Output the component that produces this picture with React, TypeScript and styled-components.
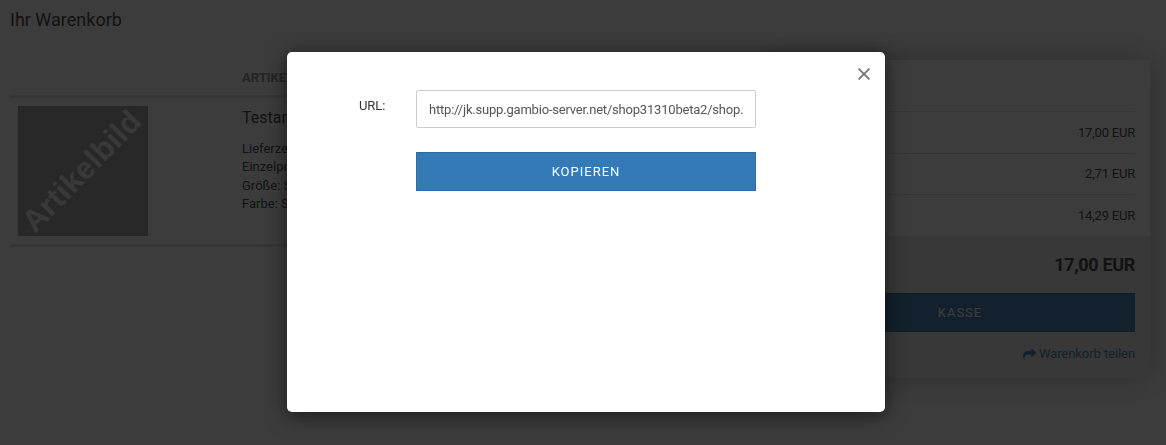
import React from "react";
import styled, { createGlobalStyle } from "styled-components";

const GlobalStyle = createGlobalStyle`
  *, *::before, *::after { box-sizing: border-box; }
  body {
    margin: 0;
    overflow: hidden;
    background: #fff;
    color: #333;
    font: 13px/18.5px Roboto, "Liberation Sans", sans-serif;
  }
`;

const Page = styled.div`
  height: 445px;
  padding: 8px 16px 0 10px;
`;

const Title = styled.h1`
  margin: 0;
  font-size: 18px;
  line-height: 24px;
  font-weight: 400;
`;

const Columns = styled.div`
  display: grid;
  grid-template-columns: 730px 380px;
  gap: 30px;
  align-items: start;
  margin-top: 28px;
`;

const CartTable = styled.section`
  padding-top: 9px;
`;

const CartHead = styled.div`
  height: 29px;
  padding-left: 232px;
  border-bottom: 3px solid #e0e0e0;
  color: #888;
  font-weight: 700;
  line-height: 18px;
  text-transform: uppercase;
`;

const CartRow = styled.div`
  display: grid;
  grid-template-columns: 130px 1fr;
  column-gap: 94px;
  height: 149px;
  padding: 8px 0 0 8px;
  border-bottom: 3px solid #e0e0e0;
`;

const Thumb = styled.svg`
  display: block;
  width: 130px;
  height: 130px;
  overflow: visible;
  background: #9c9c9c;
`;

const ItemName = styled.div`
  padding-top: 1px;
  margin-bottom: 11px;
  font-size: 16px;
  line-height: 22px;
`;

const ItemDetail = styled.div`
  line-height: 18.4px;
`;

const Summary = styled.aside`
  background: #fff;
  box-shadow: 0 0 30px rgba(0, 0, 0, 0.3);
`;

const SummaryRows = styled.div`
  padding: 51px 15px 0;
`;

const SummaryRow = styled.div`
  display: flex;
  justify-content: space-between;
  height: 41.6px;
  padding-top: 11.8px;
  border-top: 1px solid #ddd;
  letter-spacing: -0.2px;
`;

const SummaryFooter = styled.div`
  height: 142px;
  padding: 17px 15px 0;
  background: #eaeaea;
`;

const Total = styled.div`
  display: flex;
  justify-content: space-between;
  font-size: 18px;
  font-weight: 700;
  line-height: 24px;
  letter-spacing: -0.33px;
`;

const Button = styled.button<{ $top: number }>`
  display: block;
  width: 100%;
  height: 39px;
  margin: ${(p) => p.$top}px 0 0;
  padding: 1px 0 0;
  border: 1px solid #2e6da4;
  background: #337ab7;
  color: #fff;
  font: inherit;
  letter-spacing: 1px;
  text-transform: uppercase;
`;

const ShareLink = styled.a`
  display: flex;
  align-items: center;
  justify-content: flex-end;
  gap: 3px;
  margin-top: 13px;
  color: #337ab7;
  letter-spacing: -0.07px;
`;

const Overlay = styled.div`
  position: fixed;
  inset: 0;
  padding: 52px 0 0 287px;
  background: rgba(11, 11, 11, 0.8);
`;

const Modal = styled.div`
  position: relative;
  width: 598px;
  height: 360px;
  padding: 38px 129px 0 72px;
  border-radius: 5px;
  background: #fff;
  box-shadow: 0 3px 20px rgba(0, 0, 0, 0.6);
`;

const Close = styled.button`
  position: absolute;
  top: 15px;
  right: 14px;
  display: flex;
  padding: 0;
  border: 0;
  background: none;
`;

const Form = styled.div`
  display: grid;
  grid-template-columns: 57px 340px;
`;

const Label = styled.label`
  padding-top: 7px;
  letter-spacing: -0.1px;
`;

const UrlInput = styled.input`
  width: 100%;
  height: 38px;
  padding: 0 11px 0 12px;
  border: 1px solid #ccc;
  border-radius: 2px;
  background: #fff;
  color: #555;
  font: inherit;
  letter-spacing: -0.2px;
  outline: none;
`;

const details = ["Lieferzeit: 3-4 Tage", "Einzelpreis 17,00 EUR", "Größe: S", "Farbe: Schwarz"];
const sums = [
  ["Zwischensumme", "17,00 EUR"],
  ["inkl. 19% MwSt.", "2,71 EUR"],
  ["Summe netto", "14,29 EUR"],
];

export default function App() {
  return (
    <>
      <GlobalStyle />
      <Page>
        <Title>Ihr Warenkorb</Title>
        <Columns>
          <CartTable>
            <CartHead>Artikel</CartHead>
            <CartRow>
              <Thumb viewBox="0 0 130 130">
                <text
                  transform="translate(17 128) rotate(-45.8)"
                  fontFamily="Liberation Sans, sans-serif"
                  fontWeight="700"
                  fontSize="31"
                  textLength="155"
                  fill="#ededed"
                >
                  Artikelbild
                </text>
              </Thumb>
              <div>
                <ItemName>Testartikel</ItemName>
                {details.map((d) => (
                  <ItemDetail key={d}>{d}</ItemDetail>
                ))}
              </div>
            </CartRow>
          </CartTable>
          <Summary>
            <SummaryRows>
              {sums.map(([name, value]) => (
                <SummaryRow key={name}>
                  <span>{name}</span>
                  <span>{value}</span>
                </SummaryRow>
              ))}
            </SummaryRows>
            <SummaryFooter>
              <Total>
                <span>Summe</span>
                <span>17,00 EUR</span>
              </Total>
              <Button $top={16}>Kasse</Button>
              <ShareLink>
                <svg width="13" height="13" viewBox="0 0 1792 1792" fill="currentColor">
                  <path d="M1792 640q0 26-19 45l-512 512q-19 19-45 19t-45-19-19-45v-256h-224q-98 0-175.5 6t-154 21.5-133 42.5-105.5 69.5-80 101-48.5 138.5-17.5 181q0 55 5 123 0 6 2.5 23.5t2.5 26.5q0 15-8.5 25t-23.5 10q-16 0-28-17-7-9-13-22t-13.5-30-10.5-24q-127-285-127-451 0-199 53-333 162-403 875-403h224v-256q0-26 19-45t45-19 45 19l512 512q19 19 19 45z" />
                </svg>
                <span>Warenkorb teilen</span>
              </ShareLink>
            </SummaryFooter>
          </Summary>
        </Columns>
      </Page>
      <Overlay>
        <Modal>
          <Close aria-label="Schließen">
            <svg width="14" height="14" viewBox="0 0 14 14" stroke="#777" strokeWidth="1.9" fill="none">
              <path d="M1.6 1.6 12.4 12.4M12.4 1.6 1.6 12.4" />
            </svg>
          </Close>
          <Form>
            <Label htmlFor="share-url">URL:</Label>
            <div>
              <UrlInput
                id="share-url"
                readOnly
                value="http://jk.supp.gambio-server.net/shop31310beta2/shop."
              />
              <Button $top={24}>Kopieren</Button>
            </div>
          </Form>
        </Modal>
      </Overlay>
    </>
  );
}
